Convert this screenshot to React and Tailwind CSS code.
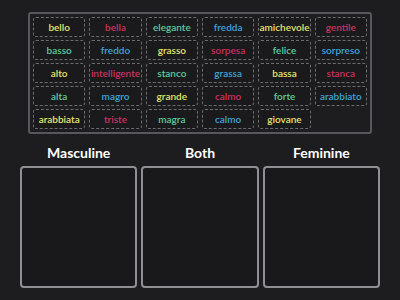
import React from "react";

const colors = {
  y: "text-[#e6e36c]",
  p: "text-[#c9325e]",
  g: "text-[#5ccb9c]",
  b: "text-[#3ea4d6]",
};

const words = [
  ["bello", "y"], ["bella", "p"], ["elegante", "g"], ["fredda", "b"], ["amichevole", "y"], ["gentile", "p"],
  ["basso", "g"], ["freddo", "b"], ["grasso", "y"], ["sorpesa", "p"], ["felice", "g"], ["sorpreso", "b"],
  ["alto", "y"], ["intelligente", "p"], ["stanco", "g"], ["grassa", "b"], ["bassa", "y"], ["stanca", "p"],
  ["alta", "g"], ["magro", "b"], ["grande", "y"], ["calmo", "p"], ["forte", "g"], ["arabbiato", "b"],
  ["arabbiata", "y"], ["triste", "p"], ["magra", "g"], ["calmo", "b"], ["giovane", "y"],
];

export default function App() {
  return (
    <div className="w-[400px] h-[300px] bg-[#1d1c1f] overflow-hidden flex flex-col" style={{ fontFamily: "Lato, 'Noto Sans', sans-serif" }}>
      <div className="ml-[28px] mt-[12px] w-[344px] h-[122px] border-2 border-[#58585c] rounded-[3px] p-[3px] grid grid-cols-6 grid-rows-5 gap-x-[4px] gap-y-[3px]">
        {words.map(([w, c], i) => (
          <div key={i} className={`border border-dashed border-[#6c6c70] rounded-[3px] bg-[#1a191c] flex items-center justify-center text-[10px] leading-none font-semibold whitespace-nowrap ${colors[c]}`}>
            {w}
          </div>
        ))}
      </div>
      <div className="ml-[20px] w-[360px] grid grid-cols-3 gap-x-[4px] h-[32px] items-center">
        {["Masculine", "Both", "Feminine"].map((t) => (
          <div key={t} className="text-center text-white text-[14px] font-bold leading-none pt-[5px]">{t}</div>
        ))}
      </div>
      <div className="ml-[20px] w-[360px] h-[122px] grid grid-cols-3 gap-x-[4px]">
        {[0, 1, 2].map((i) => (
          <div key={i} className="border-2 border-[#909094] rounded-[4px] bg-[#19181b]" />
        ))}
      </div>
    </div>
  );
}
